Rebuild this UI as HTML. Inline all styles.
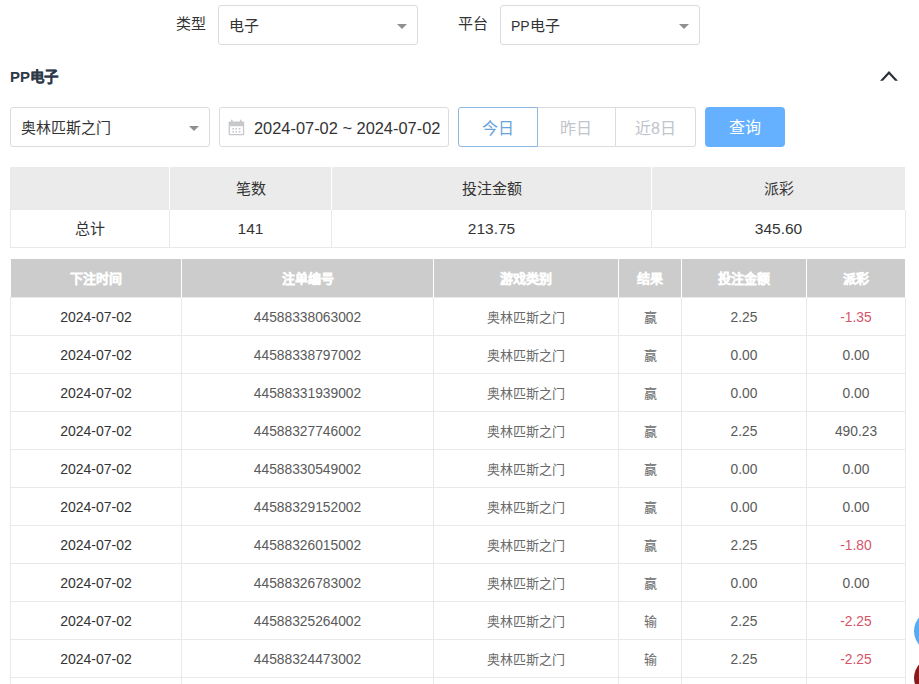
<!DOCTYPE html>
<html lang="zh-CN"><head><meta charset="utf-8">
<style>
*{box-sizing:border-box;margin:0;padding:0}
html,body{width:919px;height:684px;overflow:hidden;background:#fff;font-family:"Liberation Sans",sans-serif;color:#333;font-size:14px}
s,b,i{text-decoration:none;font-style:normal;font-weight:inherit}
.abs{position:absolute}
.lbl{position:absolute;font-size:15px;color:#333;line-height:20px;white-space:nowrap}
.sel{position:absolute;height:40px;border:1px solid #dcdcdc;border-radius:3px;background:#fff}
.sel .t{position:absolute;left:10px;top:1px;line-height:38px;font-size:15px;color:#333;white-space:nowrap}
.sel .t s{font-size:14px}
.sel .arr{position:absolute;right:10px;top:18px;width:0;height:0;border-left:5px solid transparent;border-right:5px solid transparent;border-top:5px solid #909090}
.h{position:absolute;left:10px;top:67px;font-size:15px;font-weight:bold;color:#2d3846;line-height:20px;white-space:nowrap}
.rb{position:absolute;top:107px;height:40px;width:79px;border:1px solid #dcdcdc;text-align:center;line-height:41px;font-size:16px;color:#c0c4cc;background:#fff;white-space:nowrap}
.btn{position:absolute;left:705px;top:107px;width:80px;height:40px;border-radius:4px;background:#66b1ff;color:#fff;font-size:16px;text-align:center;line-height:42px}
table{position:absolute;border-collapse:collapse;table-layout:fixed}
td,th{text-align:center;padding:0;font-weight:normal;white-space:nowrap}
.sum{left:10px;top:167px;width:895px}
.sum th{background:#ebebeb;height:40px;font-size:15px;color:#333;border-left:1px solid #fff;line-height:40px;padding-top:2px}
.sum td{height:38px;border:1px solid #e9e9e9;font-size:15.5px;color:#333;line-height:36px;padding-top:0}
.sum td b{font-size:15px;position:relative;top:0}
.main{left:10px;top:259px;width:895px}
.main th{background:#ccc;height:38px;color:#fff;font-size:13px;border-left:1px solid #fff;-webkit-text-stroke:1px #fff;padding-top:0}
.main td{height:38px;border:1px solid #e9e9e9;font-size:13.8px;color:#5a5a5a;padding-top:2px}
.main td b{font-size:13px;position:relative;top:-1px;color:#6a6a6a}
.main td.d{color:#333;font-size:14px}
.main td.red{color:#d65468}
</style></head><body>
<div class="lbl" style="left:176px;top:14px">类型</div>
<div class="sel" style="left:218px;top:5px;width:200px"><span class="t">电子</span><i class="arr"></i></div>
<div class="lbl" style="left:458px;top:14px">平台</div>
<div class="sel" style="left:500px;top:5px;width:200px"><span class="t"><s>PP</s>电子</span><i class="arr"></i></div>

<div class="h">PP<b style="font-size:14.5px;-webkit-text-stroke:0.2px #2d3846;position:relative;top:-0.5px">电子</b></div>
<svg class="abs" style="left:879px;top:69px" width="20" height="14" viewBox="0 0 20 14"><path d="M1 11.7 L10 2 L19 11.7 L16 11.7 L10 5.2 L4 11.7 Z" fill="#2b303a"/></svg>

<div class="sel" style="left:10px;top:107px;width:200px"><span class="t">奥林匹斯之门</span><i class="arr"></i></div>
<div class="sel" style="left:219px;top:107px;width:230px">
<svg class="abs" style="left:8px;top:11px" width="17" height="17" viewBox="0 0 17 17"><g fill="#c6c8cc"><rect x="0.6" y="2.5" width="15.6" height="13.8" rx="1"/><rect x="3" y="0.7" width="1.6" height="3.2"/><rect x="11.9" y="0.7" width="1.6" height="3.2"/></g><rect x="1.9" y="7.2" width="13" height="7.8" fill="#fff"/><g fill="#c6c8cc"><rect x="4.4" y="9" width="1.6" height="1.6"/><rect x="7.4" y="9" width="1.6" height="1.6"/><rect x="10.8" y="9" width="1.6" height="1.6"/><rect x="4.4" y="12" width="1.6" height="1.6"/><rect x="7.4" y="12" width="1.6" height="1.6"/><rect x="10.8" y="12" width="1.6" height="1.6"/></g></svg>
<span class="t" style="left:34px;font-size:16.4px">2024-07-02 ~ 2024-07-02</span></div>

<div class="rb" style="left:458px;border-color:#8cb8e2;color:#6aa3da;border-radius:3px 0 0 3px;width:80px;z-index:2">今日</div>
<div class="rb" style="left:537px;border-left:none">昨日</div>
<div class="rb" style="left:616px;border-left:none;border-radius:0 3px 3px 0;width:80px">近8日</div>
<div class="btn">查询</div>

<table class="sum">
<colgroup><col style="width:159px"><col style="width:162px"><col style="width:320px"><col style="width:254px"></colgroup>
<tr><th style="border-left:1px solid #e9e9e9"></th><th>笔数</th><th>投注金额</th><th style="border-right:1px solid #fff">派彩</th></tr>
<tr><td><b>总计</b></td><td>141</td><td>213.75</td><td>345.60</td></tr>
</table>

<table class="main">
<colgroup><col style="width:171px"><col style="width:252px"><col style="width:185px"><col style="width:63px"><col style="width:125px"><col style="width:99px"></colgroup>
<tr><th style="border-left:none">下注时间</th><th>注单编号</th><th>游戏类别</th><th>结果</th><th>投注金额</th><th style="border-right:1px solid #fff">派彩</th></tr>
<tr><td class="d"><s>2024-07-02</s></td><td><s>44588338063002</s></td><td><b>奥林匹斯之门</b></td><td><b>赢</b></td><td><s>2.25</s></td><td class="red"><s>-1.35</s></td></tr>
<tr><td class="d"><s>2024-07-02</s></td><td><s>44588338797002</s></td><td><b>奥林匹斯之门</b></td><td><b>赢</b></td><td><s>0.00</s></td><td><s>0.00</s></td></tr>
<tr><td class="d"><s>2024-07-02</s></td><td><s>44588331939002</s></td><td><b>奥林匹斯之门</b></td><td><b>赢</b></td><td><s>0.00</s></td><td><s>0.00</s></td></tr>
<tr><td class="d"><s>2024-07-02</s></td><td><s>44588327746002</s></td><td><b>奥林匹斯之门</b></td><td><b>赢</b></td><td><s>2.25</s></td><td><s>490.23</s></td></tr>
<tr><td class="d"><s>2024-07-02</s></td><td><s>44588330549002</s></td><td><b>奥林匹斯之门</b></td><td><b>赢</b></td><td><s>0.00</s></td><td><s>0.00</s></td></tr>
<tr><td class="d"><s>2024-07-02</s></td><td><s>44588329152002</s></td><td><b>奥林匹斯之门</b></td><td><b>赢</b></td><td><s>0.00</s></td><td><s>0.00</s></td></tr>
<tr><td class="d"><s>2024-07-02</s></td><td><s>44588326015002</s></td><td><b>奥林匹斯之门</b></td><td><b>赢</b></td><td><s>2.25</s></td><td class="red"><s>-1.80</s></td></tr>
<tr><td class="d"><s>2024-07-02</s></td><td><s>44588326783002</s></td><td><b>奥林匹斯之门</b></td><td><b>赢</b></td><td><s>0.00</s></td><td><s>0.00</s></td></tr>
<tr><td class="d"><s>2024-07-02</s></td><td><s>44588325264002</s></td><td><b>奥林匹斯之门</b></td><td><b>输</b></td><td><s>2.25</s></td><td class="red"><s>-2.25</s></td></tr>
<tr><td class="d"><s>2024-07-02</s></td><td><s>44588324473002</s></td><td><b>奥林匹斯之门</b></td><td><b>输</b></td><td><s>2.25</s></td><td class="red"><s>-2.25</s></td></tr>
<tr><td></td><td></td><td></td><td></td><td></td><td></td></tr>
</table>

<div class="abs" style="left:914px;top:610px;width:42px;height:42px;border-radius:50%;background:#5aaaf0"></div>
<div class="abs" style="left:914px;top:657px;width:42px;height:42px;border-radius:50%;background:#8b1a1a"></div>
</body></html>
